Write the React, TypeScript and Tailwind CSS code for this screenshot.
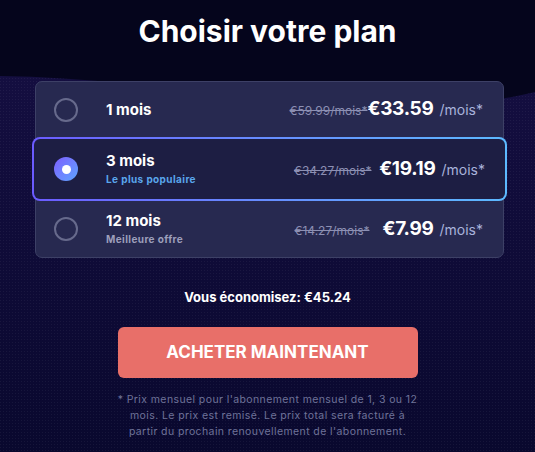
import React from 'react';

const PLANS = [
  { id: '1', label: '1 mois', sub: '', old: '€59.99/mois*', price: '€33.59' },
  { id: '3', label: '3 mois', sub: 'Le plus populaire', old: '€34.27/mois*', price: '€19.19' },
  { id: '12', label: '12 mois', sub: 'Meilleure offre', old: '€14.27/mois*', price: '€7.99' },
];

function Radio({ checked }: { checked: boolean }) {
  if (checked) {
    return (
      <div className="w-[24px] h-[24px] shrink-0 rounded-full bg-gradient-to-br from-[#7b5cff] to-[#5aa4ff] flex items-center justify-center">
        <div className="w-[9px] h-[9px] rounded-full bg-white" />
      </div>
    );
  }
  return <div className="w-[24px] h-[24px] shrink-0 rounded-full border-2 border-[#676a8c]" />;
}

function PlanContent({ plan, checked }: { plan: typeof PLANS[number]; checked: boolean }) {
  return (
    <div className="flex items-center h-full">
      <Radio checked={checked} />
      <div className="ml-[28px] flex flex-col">
        <span className="text-[15px] font-bold text-white leading-[18px]">{plan.label}</span>
        {plan.sub && (
          <span
            className={
              'text-[10px] font-bold tracking-[0.4px] leading-[14px] mt-[2px] ' +
              (checked ? 'text-[#5aa6ec]' : 'text-[#9d9fbb]')
            }
          >
            {plan.sub}
          </span>
        )}
      </div>
      <div className="ml-auto flex items-baseline">
        <span className="text-[12px] text-[#8c8fb3] line-through">{plan.old}</span>
        <span className="min-w-[64px] text-right text-[19px] font-bold text-white tracking-[-0.3px]">{plan.price}</span>
        <span className="ml-[6px] text-[14px] text-[#a9b3dc]">/mois*</span>
      </div>
    </div>
  );
}

export default function App() {
  return (
    <div className="relative w-full h-[452px] overflow-hidden bg-[#05051c] font-[Inter,sans-serif]">
      <svg className="absolute inset-0 w-full h-full" viewBox="0 0 535 452" preserveAspectRatio="none">
        <defs>
          <linearGradient id="wave" x1="0" y1="0" x2="0" y2="1">
            <stop offset="0" stopColor="#140e40" />
            <stop offset="1" stopColor="#09082e" />
          </linearGradient>
          <pattern id="dots" width="3" height="3" patternUnits="userSpaceOnUse">
            <rect width="1" height="1" fill="#ffffff" opacity="0.05" />
          </pattern>
        </defs>
        <path d="M0 76 C 180 78, 380 130, 535 92 L535 452 L0 452 Z" fill="url(#wave)" />
        <path d="M0 76 C 180 78, 380 130, 535 92 L535 452 L0 452 Z" fill="url(#dots)" />
      </svg>

      <div className="relative flex flex-col items-center pt-[12px]">
        <h1 className="text-[30px] font-bold text-white leading-[38px]">Choisir votre plan</h1>

        <div className="mt-[31px] w-[469px] ml-[4px] rounded-[7px] border border-[#3d4066] bg-[#272950]">
          <div className="h-[55px] pl-[18px] pr-[20px]">
            <PlanContent plan={PLANS[0]} checked={false} />
          </div>
          <div className="h-[64px] -mx-[4px] rounded-[8px] p-[2px] bg-gradient-to-r from-[#6b5bff] to-[#5cb9ff]">
            <div className="h-full rounded-[6px] bg-[#1d1e43] pl-[20px] pr-[20px]">
              <PlanContent plan={PLANS[1]} checked={true} />
            </div>
          </div>
          <div className="h-[56px] pl-[18px] pr-[20px]">
            <PlanContent plan={PLANS[2]} checked={false} />
          </div>
        </div>

        <p className="mt-[31px] text-[13px] font-bold text-white leading-[16px]">Vous économisez: €45.24</p>

        <button className="mt-[22px] w-[300px] h-[51px] rounded-[6px] bg-[#e86f69] text-white text-[17px] font-bold">
          ACHETER MAINTENANT
        </button>

        <p className="mt-[14px] w-[320px] text-center text-[10.5px] leading-[16px] tracking-[0.4px] text-[#6f7399]">
          * Prix mensuel pour l'abonnement mensuel de 1, 3 ou 12
          <br />
          mois. Le prix est remisé. Le prix total sera facturé à
          <br />
          partir du prochain renouvellement de l'abonnement.
        </p>
      </div>
    </div>
  );
}
